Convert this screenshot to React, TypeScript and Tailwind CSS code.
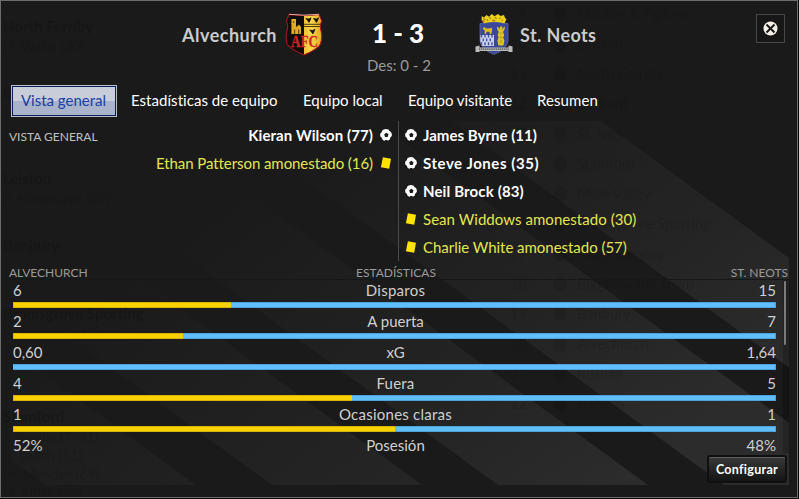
import clsx from "clsx";

type MatchEvent = { kind: "goal" | "card"; text: string; tracking?: string };
type Stat = { label: string; home: string; away: string; share: number | null; tracking?: string };

const homeEvents: MatchEvent[] = [
  { kind: "goal", text: "Kieran Wilson (77)", tracking: "tracking-[0.08px]" },
  { kind: "card", text: "Ethan Patterson amonestado (16)", tracking: "tracking-[-0.07px]" },
];

const awayEvents: MatchEvent[] = [
  { kind: "goal", text: "James Byrne (11)", tracking: "tracking-[0.02px]" },
  { kind: "goal", text: "Steve Jones (35)", tracking: "tracking-[0.55px]" },
  { kind: "goal", text: "Neil Brock (83)", tracking: "tracking-[0.14px]" },
  { kind: "card", text: "Sean Widdows amonestado (30)", tracking: "tracking-[0.05px]" },
  { kind: "card", text: "Charlie White amonestado (57)", tracking: "tracking-[-0.03px]" },
];

const stats: Stat[] = [
  { label: "Disparos", home: "6", away: "15", share: 6 / 21, tracking: "tracking-[0.25px]" },
  { label: "A puerta", home: "2", away: "7", share: 2 / 9 },
  { label: "xG", home: "0,60", away: "1,64", share: 0 },
  { label: "Fuera", home: "4", away: "5", share: 4 / 9, tracking: "tracking-[0.2px]" },
  { label: "Ocasiones claras", home: "1", away: "1", share: 1 / 2, tracking: "tracking-[0.24px]" },
  { label: "Posesión", home: "52%", away: "48%", share: null },
];

const tabs = [
  { label: "Estadísticas de equipo", className: "ml-[14px] w-[172px] tracking-[0.04px]" },
  { label: "Equipo local", className: "w-[105px]" },
  { label: "Equipo visitante", className: "w-[129px] tracking-[-0.04px]" },
  { label: "Resumen", className: "w-[80px] tracking-[0.1px]" },
];

// names of the screen underneath, which show faintly through the dialog
const ghostScorers = [
  { y: 32, text: "North Ferriby", bold: true },
  { y: 51, text: "H. Wallis (20)" },
  { y: 98, text: "B", bold: true },
  { y: 184, text: "Leiston", bold: true },
  { y: 203, text: "S. Kowalczyk (39)" },
  { y: 251, text: "Banbury", bold: true },
  { y: 319, text: "Bromsgrove Sporting", bold: true },
  { y: 337, text: "K. Hancock (62)" },
  { y: 422, text: "Stamford", bold: true },
  { y: 442, text: "J. Sandal (7, 81)" },
  { y: 460, text: "B. Leach (51)" },
  { y: 479, text: "M. Mendes (69)" },
  { y: 495, text: "H. Vince (76)" },
];

const ghostTable = [
  "Maldon & Tiptree", "Leiston", "North Ferriby", "Bedford", "St. Ives", "Stamford", "Mole Valley",
  "Bromsgrove Sporting", "Kings Langley", "Biggleswade Town", "Banbury", "Alvechurch", "Rushall", "Barwell",
];

function Backdrop() {
  // diagonal bands, 226px apart along the bottom edge
  const bands = [46, 272, 498, 724, 950];
  return (
    <svg className="pointer-events-none absolute inset-0" width="796" height="496" viewBox="1 1 796 496" aria-hidden="true">
      <defs>
        <linearGradient id="fade" gradientUnits="userSpaceOnUse" x1="330" y1="120" x2="610" y2="500">
          <stop offset="0" stopColor="#fff" stopOpacity="0" />
          <stop offset="0.35" stopColor="#fff" stopOpacity="0.025" />
          <stop offset="0.65" stopColor="#fff" stopOpacity="0.045" />
          <stop offset="1" stopColor="#fff" stopOpacity="0.08" />
        </linearGradient>
        <clipPath id="area"><rect x="9" y="121" width="780" height="364" /></clipPath>
      </defs>
      <g clipPath="url(#area)" fill="url(#fade)">
        {bands.map((x) => <path key={x} d={`M${x} 485h150l-499-364h-150z`} />)}
      </g>
      <g fill="#0c0c0c" fontFamily="Lato, sans-serif">
        {ghostScorers.map((g) => <text key={g.y} x="3" y={g.y} fontWeight={g.bold ? 700 : 400} fillOpacity={g.bold ? 0.3 : 0.2} fontSize={g.bold ? 15 : 14}>{g.text}</text>)}
      </g>
      <g fill="#0c0c0c" fillOpacity="0.18" fontFamily="Lato, sans-serif" fontSize="14.5">
        {ghostTable.map((name, i) => (
          <g key={name}>
            <text x="527" y={19 + i * 30} textAnchor="end">{i + 9}</text>
            <circle cx="560" cy={14 + i * 30} r="7" fillOpacity="0.12" />
            <text x="577" y={19 + i * 30}>{name}</text>
          </g>
        ))}
      </g>
    </svg>
  );
}

function AlvechurchCrest() {
  return (
    <svg width="38" height="43" viewBox="0 0 38 43" aria-hidden="true">
      <defs>
        <clipPath id="afc"><path d="M4 1.500Q19 3.500 34 1.500L36.800 8Q35 11 35.600 16Q38 24 35.500 31Q33 36 19 42Q5 36 2 31Q0 24 2.400 16Q3.400 11 1.200 8z" /></clipPath>
        <linearGradient id="gold" x1="0" x2="1"><stop offset="0" stopColor="#f0bf34" /><stop offset="0.35" stopColor="#fbd94e" /><stop offset="1" stopColor="#dfa51a" /></linearGradient>
      </defs>
      <g clipPath="url(#afc)">
        <rect width="19" height="43" fill="#100c0b" />
        <rect x="19" width="19" height="43" fill="url(#gold)" />
        <path d="M19 11.300h19M19 13.500h19" stroke="#3a2c0a" strokeWidth="0.9" />
        <path d="M6.400 6h4.600v7.500h1l2-2 2 2.500v7H6.400z" fill="#e0ac22" />
        <path d="M8.200 8h1v2h-1zM9 16.500h1.200v4.500H9zM13 16.500h1.300v4.500H13z" fill="#6d4e0c" />
        <path d="M21 5.500l3 .5 2-1.200-.8 2.400-1.200 2.200-1-1.500zM28.500 5.500l3 .5 2-1.200-.8 2.400-1.200 2.200-1-1.500zM24.800 17l3 .5 2-1.200-.8 2.400-1.200 2.200-1-1.500z" fill="#17110a" stroke="#17110a" strokeWidth="0.8" />
      </g>
      <path d="M4 1.500Q19 3.500 34 1.500L36.800 8Q35 11 35.600 16Q38 24 35.500 31Q33 36 19 42Q5 36 2 31Q0 24 2.400 16Q3.400 11 1.200 8z" fill="none" stroke="#a3171c" strokeWidth="1.100" />
      <path d="M4 1.300Q19 3 34 1.300" fill="none" stroke="#e5a7a0" strokeWidth="1" />
      <text x="6" y="33.500" fontFamily="Liberation Serif, serif" fontWeight="700" fontSize="16" textLength="27" lengthAdjust="spacingAndGlyphs" fill="#d32426" stroke="#d32426" strokeWidth="0.300">AFC</text>
    </svg>
  );
}

function StNeotsCrest() {
  return (
    <svg width="38" height="43" viewBox="0 0 38 43" aria-hidden="true">
      <defs><clipPath id="sn"><path d="M5 10.500Q19 7.500 33 10.500V28Q32 36 19 41.500Q6 36 5 28z" /></clipPath></defs>
      <g clipPath="url(#sn)">
        <rect width="38" height="43" fill="#3a4897" />
        <path d="M5 22h14v11H5z" fill="#c9d0ec" />
        <path d="M6.500 22v2.600M10 22v2.600M13.500 22v2.600M17 22v2.600M8.200 25.600v2.600M11.700 25.600v2.600M15.200 25.600v2.600M6.500 29.200v3M10 29.200v3M13.500 29.200v3M17 29.200v3" stroke="#3d4a98" strokeWidth="1.300" />
      </g>
      <path d="M5 10.500Q19 7.500 33 10.500V28Q32 36 19 41.500Q6 36 5 28z" fill="none" stroke="#6871a8" strokeWidth="0.700" />
      <path d="M7.500 15.500l2-1.500 1.500 1.500h3.500l2.500-.8v3l-.8 3.300h-1.200l-.5-2.200h-3L11 21H9.700V17.500z" fill="#e2bd1c" />
      <path d="M22 13.500l1.500 1 1 2.500v-2.500l1.500-1.500 1.500 1.500V17l1-2.500 1.500-1-.5 3-1.500 2.500 1.200 3-1 2.500 1.200 3-1 5h-5l-1-5 1.200-3-1-2.500 1.200-3-1.500-2.500z" fill="#e0c02a" />
      <path d="M26 19v2.500M24.900 24.500h2.200M26 27v3" stroke="#8c7f22" strokeWidth="0.700" />
      <path d="M6.500 7l.3-4L9 4.500 11.500 2l2.500 1.700L16.800 1l2.700 2.200L23 1l2.500 2L29 2l1 3 1.500 1-2 4.300Q19 7 9 10.300z" fill="#ecd01a" />
      <path d="M8 5.500l2.500 1M14.500 4l1 2M20 4l1.500 2M25.500 4.500l-1 1.500M12 6l1 2M18 6.500V8M27.500 6.500l-1 1.500" stroke="#6b6212" strokeWidth="0.800" />
      <path d="M6.500 8l2-1.200L10.500 9zM17.500 7.800l2-1.200 1 1.500" fill="#d0622f" />
      <path d="M.5 33.500l4-1v2h29v-2l4 1v5.500h-4v-1h-29v1h-4z" fill="#b9bbb8" />
      <path d="M4 36.200h30" stroke="#66686a" strokeWidth="1.800" strokeDasharray="1.200 .7" />
    </svg>
  );
}

function EventIcon({ kind }: { kind: MatchEvent["kind"] }) {
  if (kind === "card") {
    return (
      <svg width="12" height="12" viewBox="0 0 12 12" className="shrink-0" aria-hidden="true">
        <path d="M2.900.3L11 1.700 9.200 11.700.9 10.300z" fill="#ffe400" />
      </svg>
    );
  }
  return (
    <svg width="12" height="12" viewBox="0 0 12 12" className="shrink-0" aria-hidden="true">
      <circle cx="6" cy="6" r="5.900" fill="#fff" />
      <path d="M6.300 3.700l2.200 1.600-.8 2.600H5L4.200 5.300zM0 4.200l1.500-.6L2.400 1.500 1 .5H0zM8.800 0l.3 1.500 2 1.500L12 2V0zM0 7.800l1.600.6 1 2.200L2 12H0zM12 7.300l-1.500.9-.9 2.300.9 1.500H12zM4.800 12l.5-1h1.900l.5 1z" fill="#1a1a1a" />
    </svg>
  );
}

function EventRow({ event, home }: { event: MatchEvent; home?: boolean }) {
  return (
    <li className={clsx("flex h-7 items-center text-[15px]", home ? "flex-row-reverse gap-[7px]" : "gap-[6px]", event.tracking, event.kind === "goal" ? "font-bold text-white" : "text-[#e3e653]")}>
      <EventIcon kind={event.kind} />
      <span className="whitespace-nowrap">{event.text}</span>
    </li>
  );
}

function StatRow({ stat }: { stat: Stat }) {
  return (
    <li className="h-[31px]">
      <div className="grid h-[22px] grid-cols-[1fr_auto_1fr] items-start text-[15px] leading-[20px] text-[#cfcfcf]">
        <span>{stat.home}</span>
        <span className={clsx("pl-[2px]", stat.tracking)}>{stat.label}</span>
        <span className="text-right">{stat.away}</span>
      </div>
      {stat.share === null ? null : (
        <div className="flex h-[6px]">
          {stat.share > 0 ? <div className="border border-r-0 border-[#d9b404] bg-[#fbd100]" style={{ width: `${stat.share * 100}%` }} /> : null}
          <div className="flex-1 border border-l-0 border-[#4da2dc] bg-[#5fbefb]" />
        </div>
      )}
    </li>
  );
}

export default function App() {
  return (
    <div className="h-[499px] w-[799px] overflow-hidden bg-[#0b0b0b] font-[Lato,'Noto_Sans',sans-serif]">
      <main className="relative isolate flex h-[498px] w-[798px] flex-col border border-[#6c6c6c] bg-[#1a1a1a]">
        <Backdrop />
        <header className="relative grid h-[84px] shrink-0 grid-cols-[322px_152px_1fr]">
          <div className="flex h-[67px] items-center justify-end gap-[8px]">
            <h2 className="pt-[2px] text-[18px] font-bold tracking-[0.5px] text-[#c9cbcc]">Alvechurch</h2>
            <AlvechurchCrest />
          </div>
          <div className="flex flex-col items-center pt-[16px]">
            <p className="pr-[2px] text-[26px] leading-8 font-black text-white">1 - 3</p>
            <p className="mt-[7px] text-[15px] leading-[19px] text-[#9b9b9b]">Des: 0 - 2</p>
          </div>
          <div className="flex h-[67px] items-center gap-[7px]">
            <StNeotsCrest />
            <h2 className="pt-[2px] text-[18px] font-bold tracking-[0.4px] text-[#c9cbcc]">St. Neots</h2>
            <button aria-label="Cerrar" className="mr-[12px] mb-[13px] ml-auto grid h-[29px] w-[29px] place-items-center border border-[#474747] bg-[#171717]">
              <svg width="15" height="15" viewBox="0 0 15 15" aria-hidden="true">
                <circle cx="7.500" cy="7.500" r="7" fill="#f6f2e8" />
                <path d="M3.500 3.500l8 8M11.500 3.500l-8 8" stroke="#1a1a1a" strokeWidth="2" />
              </svg>
            </button>
          </div>
        </header>

        <nav className="relative flex h-8 shrink-0 items-center pl-[10px] text-[15px] text-white">
          <button className="h-8 w-[106px] border border-[#b9bdc8] bg-[#0d1f5f] p-px">
            <span className="flex h-[28px] items-center justify-center bg-linear-to-b from-[#c9cdd9] from-50% to-[#a9b3c9] to-50% pr-px pb-px text-[#1c3ca6]">Vista general</span>
          </button>
          {tabs.map((tab) => <button key={tab.label} className={clsx("pb-[2px] text-left whitespace-nowrap", tab.className)}>{tab.label}</button>)}
        </nav>

        <section className="relative flex h-[144px] shrink-0 pt-1">
          <h3 className="w-[130px] pt-[7px] pl-2 text-[12px] leading-[18px] whitespace-nowrap text-[#c0c0c0]">VISTA GENERAL</h3>
          <ul className="flex-1 pr-[6px]">{homeEvents.map((e) => <EventRow key={e.text} event={e} home />)}</ul>
          <ul className="h-[140px] w-[399px] border-l border-[#4a4a4a] pl-[6px]">{awayEvents.map((e) => <EventRow key={e.text} event={e} />)}</ul>
        </section>

        <section className="relative mr-2 ml-2 flex h-[194px] shrink-0 flex-col">
          <div className="grid h-[19px] shrink-0 grid-cols-[1fr_auto_1fr] border-b border-[#171717] pt-[4px] pr-px text-[12px] leading-[15px] text-[#9a9a9a]">
            <span>ALVECHURCH</span>
            <span className="pr-[5px]">ESTADÍSTICAS</span>
            <span className="text-right">ST. NEOTS</span>
          </div>
          <div className="flex min-h-0 flex-1">
            <ul className="mr-[7px] ml-1 w-[763px] shrink-0">{stats.map((s) => <StatRow key={s.label} stat={s} />)}</ul>
            <div className="h-[173px] w-[6px] bg-black/20 pt-px pl-px"><div className="h-[64px] w-[2px] rounded-full bg-[#7b7b7b]" /></div>
          </div>
        </section>

        <footer className="relative flex h-[30px] justify-end pr-[10px]">
          <button className="h-[28px] w-[80px] rounded-[3px] border-2 border-[#101010] bg-linear-to-b from-[#3a3a3a] to-[#151515] pt-[2px] text-[12.5px] font-bold tracking-[0.3px] text-white shadow-[inset_0_1px_0_#5c5c5c]">Configurar</button>
        </footer>
      </main>
    </div>
  );
}
